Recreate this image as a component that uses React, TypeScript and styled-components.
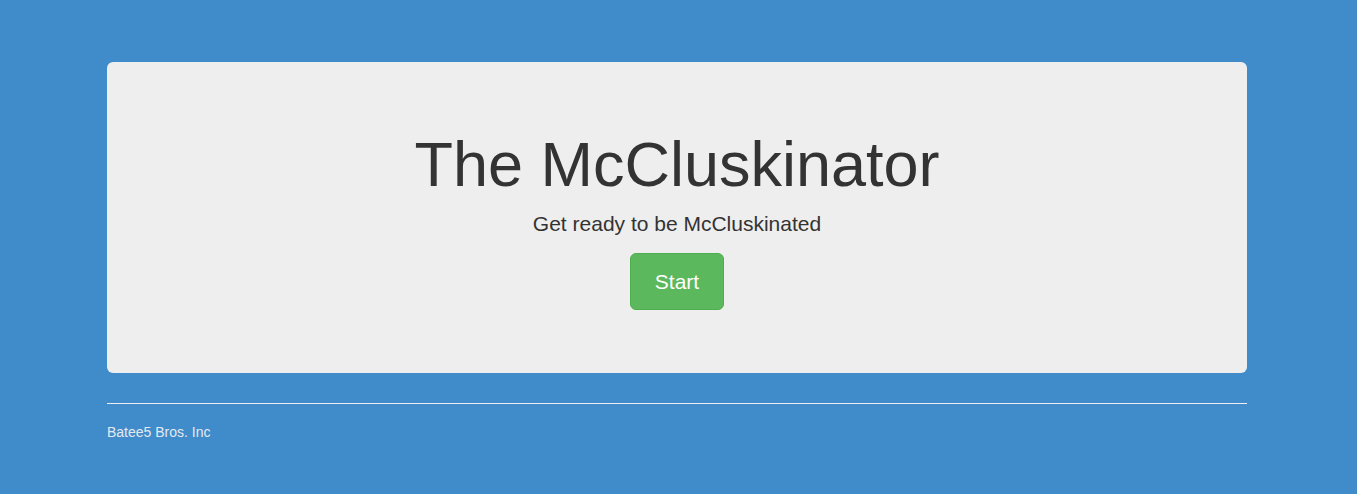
import React from "react";
import styled, { createGlobalStyle } from "styled-components";

const GlobalStyle = createGlobalStyle`
  html, body {
    margin: 0;
    padding: 0;
    background: #408bc9;
  }
  body {
    font-family: "Liberation Sans", Arial, Helvetica, sans-serif;
    font-size: 14px;
    line-height: 1.42857;
    color: #333;
  }
  * { box-sizing: border-box; }
`;

const Page = styled.div`
  min-height: 494px;
  padding-right: 3px;
  background: #408bc9;
`;

const Container = styled.div`
  width: 1140px;
  margin: 0 auto;
  padding-top: 62px;
`;

const Jumbotron = styled.section`
  background: #eeeeee;
  border-radius: 6px;
  padding: 48px 60px;
  text-align: center;
  color: #333;
`;

const Title = styled.h1`
  margin: 20px 0 10px;
  font-size: 63px;
  font-weight: 500;
  line-height: 1.1;
`;

const Lead = styled.p<{ $gap?: number }>`
  margin: 0 0 ${(p) => p.$gap ?? 15}px;
  font-size: 21px;
  font-weight: 200;
  line-height: 30px;
`;

const StartButton = styled.button`
  display: inline-block;
  font-family: inherit;
  font-size: 21px;
  line-height: 31px;
  padding: 12px 23.5px;
  color: #fff;
  background: #5cb85c;
  border: 1px solid #4cae4c;
  border-radius: 6px;
  cursor: pointer;
  vertical-align: top;
`;

const Footer = styled.footer`
  padding-top: 30px;
`;

const Rule = styled.hr`
  margin: 0 0 20px;
  border: 0;
  border-top: 1px solid #eeeeee;
`;

const FooterText = styled.p`
  margin: 0;
  font-size: 14px;
  line-height: 16px;
  color: #e4e9ef;
`;

export default function App() {
  return (
    <Page>
      <GlobalStyle />
      <Container>
        <Jumbotron>
          <Title>The McCluskinator</Title>
          <Lead $gap={14}>Get ready to be McCluskinated</Lead>
          <Lead>
            <StartButton>Start</StartButton>
          </Lead>
        </Jumbotron>
        <Footer>
          <Rule />
          <FooterText>Batee5 Bros. Inc</FooterText>
        </Footer>
      </Container>
    </Page>
  );
}
